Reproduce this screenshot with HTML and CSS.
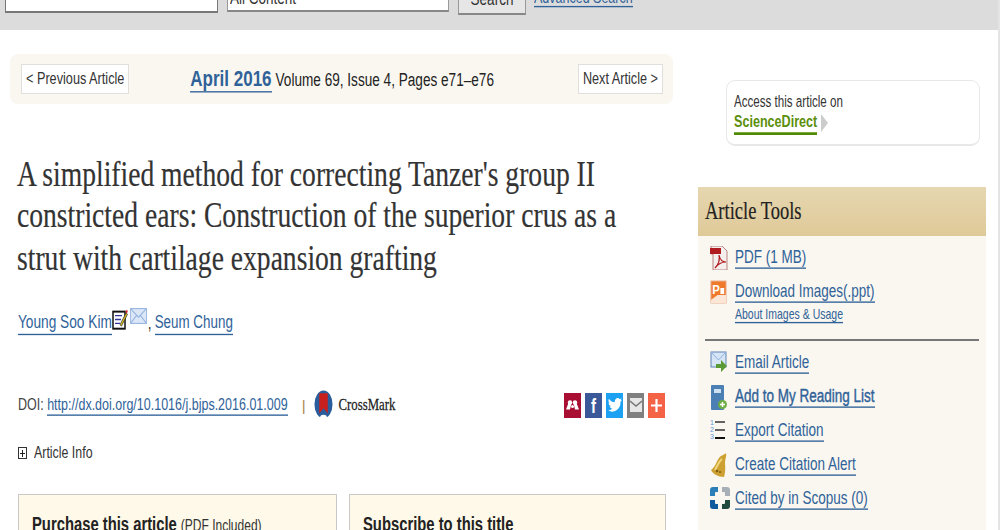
FILE: index.html
```html
<!DOCTYPE html>
<html lang="en">
<head>
<meta charset="utf-8">
<title>A simplified method for correcting Tanzer's group II constricted ears</title>
<link rel="stylesheet" href="styles.css">
</head>
<body>
<div class="page">
  <header class="search-bar">
    <div class="field field-text"></div>
    <div class="field field-select"><span class="tx">All Content</span><svg class="caret" width="7" height="4" viewBox="0 0 7 4"><path d="M0 0h7L3.500 4z" fill="#444"/></svg></div>
    <div class="search-btn"><span class="tx">Search</span></div>
    <a class="adv tx" href="#">Advanced Search</a>
  </header>
  <div class="main">
    <main class="article">
      <nav class="issue-nav">
        <a class="nav-btn" href="#"><span class="tx">&lt; Previous Article</span></a>
        <div class="issue"><a class="issue-date tx" href="#">April 2016</a><span class="issue-info tx">Volume 69, Issue 4, Pages e71–e76</span></div>
        <a class="nav-btn" href="#"><span class="tx">Next Article &gt;</span></a>
      </nav>
      <h1 class="title">A simplified method for correcting Tanzer's group II constricted ears: Construction of the superior crus as a strut with cartilage expansion grafting</h1>
      <div class="authors">
        <a class="tx" href="#">Young Soo Kim</a><svg class="ic-note" width="16" height="21" viewBox="0 0 16 16" preserveAspectRatio="none"><rect x="1" y="2" width="12" height="13" fill="#fff" stroke="#111" stroke-width="1.500"/><path d="M3 5h7M3 8h6M3 11h5" stroke="#33379a"/><path d="M8 12l6-9 1.500 1-6 9z" fill="#e2c522" stroke="#222" stroke-width=".6"/><path d="M13.500 2.500l1-2 1.300 1-.8 2z" fill="#d9232a"/></svg><svg class="ic-mail" width="17" height="16" viewBox="0 0 18 14" preserveAspectRatio="none"><rect x=".5" y=".5" width="17" height="13" fill="#dbe7f7" stroke="#9db8e0"/><path d="M1 1l8 7 8-7M1 13l6-6.500M17 13l-6-6.500" fill="none" stroke="#8fb0df"/></svg><span class="tx comma">,</span><a class="tx seum" href="#">Seum Chung</a>
      </div>
      <div class="doi-row">
        <div class="doi tx">DOI: <a href="#">http://dx.doi.org/10.1016/j.bjps.2016.01.009</a></div>
        <span class="sep">|</span>
        <svg class="cm-logo" width="19" height="30" viewBox="0 0 20 28" preserveAspectRatio="none"><ellipse cx="10" cy="13.500" rx="9.500" ry="13" fill="#2a5d9c"/><path d="M5.500 3h9v19l-4.500-5-4.500 5z" fill="#c8201f"/><path d="M6 27a4 4 0 0 1 8 0z" fill="#fff"/></svg>
        <span class="cm-text tx">CrossMark</span>
        <div class="share">
          <span class="sh sh-m"><svg width="13" height="10" viewBox="0 0 13 10"><circle cx="4" cy="2.500" r="2.200" fill="#fff"/><circle cx="9" cy="2.500" r="2.200" fill="#fff"/><circle cx="6.500" cy="6.500" r="1.500" fill="#fff"/><path d="M2.500 3h3L4 9.500H0zM7.500 3h3L13 9.500H9z" fill="#fff"/></svg></span>
          <span class="sh sh-f"><span class="tx">f</span></span>
          <span class="sh sh-t"><svg width="14" height="14" viewBox="0 0 24 20" preserveAspectRatio="none"><path d="M24 2.400a10 10 0 0 1-2.800.8A5 5 0 0 0 23.300.500a10 10 0 0 1-3.100 1.200 4.900 4.900 0 0 0-8.400 4.500A14 14 0 0 1 1.700.900a4.900 4.900 0 0 0 1.500 6.600 5 5 0 0 1-2.200-.6 4.900 4.900 0 0 0 3.900 4.900 5 5 0 0 1-2.200.1 4.900 4.900 0 0 0 4.600 3.400A9.900 9.900 0 0 1 0 17.300 14 14 0 0 0 21.500 4.900 10 10 0 0 0 24 2.400z" fill="#fff"/></svg></span>
          <span class="sh sh-e"><svg width="12" height="14" viewBox="0 0 12 14"><path d="M0 0h12v14H0z" fill="#e6e6e6"/><path d="M0 3l6 5 6-5" fill="none" stroke="#777" stroke-width="1.500"/></svg></span>
          <span class="sh sh-p"><svg width="11" height="13" viewBox="0 0 11 13"><path d="M0 6.500h11M5.500 0v13" stroke="#fff" stroke-width="2.200"/></svg></span>
        </div>
      </div>
      <div class="info-toggle"><span class="plus"></span><span class="tx">Article Info</span></div>
      <div class="offers">
        <section class="offer"><h2 class="tx">Purchase this article <small>(PDF Included)</small></h2></section>
        <section class="offer"><h2 class="tx">Subscribe to this title</h2></section>
      </div>
    </main>
    <aside class="side">
      <div class="access">
        <div class="tx">Access this article on</div>
        <div class="sd-row"><a class="tx" href="#">ScienceDirect</a><svg width="7" height="18" viewBox="0 0 7 16" preserveAspectRatio="none"><path d="M0 0l7 8-7 8z" fill="#ccc"/></svg></div>
      </div>
      <section class="tools">
        <h2><span class="tx">Article Tools</span></h2>
        <div class="tools-body">
          <ul class="tool-list first">
            <li><svg width="18" height="24" viewBox="0 0 18 24"><path d="M1 0h11l5 5v19H3V8H1z" fill="#f4efec" stroke="#a66" stroke-width=".8"/><rect y="2" width="11" height="6" fill="#b01c20"/><path d="M5 22c3-3 5-8 4-13 1 5 3 7 7 7-4 0-8 2-11 6z" fill="none" stroke="#b01c20" stroke-width="1.200"/></svg><a class="tx" href="#">PDF (1 MB)</a></li>
            <li class="tall"><svg width="17" height="24" viewBox="0 0 18 24" preserveAspectRatio="none"><rect x="1" y="1" width="16" height="22" fill="#f07a2c" stroke="#e9b090"/><path d="M8 15h9v8H1v-3z" fill="#fbe6d8"/><text x="2.500" y="14" class="p-glyph">P</text><rect x="11" y="8" width="4" height="6" fill="#fff"/></svg><div class="stack"><a class="tx" href="#">Download Images(.ppt)</a><a class="about tx" href="#">About Images &amp; Usage</a></div></li>
          </ul>
          <ul class="tool-list">
            <li><svg width="18" height="24" viewBox="0 0 18 24"><rect x="1" y="1" width="15" height="15" fill="#d6e5f6" stroke="#5c83b5"/><path d="M1 1l7.500 8L16 1" fill="none" stroke="#8fb0df"/><path d="M6 13h5v-4l6 6-6 6v-4H6z" fill="#5a9a35"/></svg><a class="tx" href="#">Email Article</a></li>
            <li><svg width="18" height="25" viewBox="0 0 18 25"><rect x="1" y="0" width="13" height="25" rx="1" fill="#4c7fb3"/><rect x="4" y="4" width="7" height="4" fill="#cfe0f0"/><circle cx="12.500" cy="19.500" r="4.500" fill="#6fae45"/><path d="M10 19.500h5M12.500 17v5" stroke="#fff" stroke-width="1.500"/></svg><a class="strong tx" href="#">Add to My Reading List</a></li>
            <li><svg width="18" height="22" viewBox="0 0 18 22"><text x="0" y="6" class="num">1</text><text x="0" y="13" class="num">2</text><text x="0" y="20" class="num">3</text><path d="M5 3h10M5 11h10" stroke="#333" stroke-width="1.500"/><path d="M5 19h10" stroke="#111" stroke-width="2"/></svg><a class="tx" href="#">Export Citation</a></li>
            <li><svg width="18" height="24" viewBox="0 0 18 24"><path d="M16 0c-2 2-5 2-7 5-3 4-3 8-8 12 2 4 7 7 13 7 2-7 1-12 1-15 0-3 2-6 1-9z" fill="#cda032"/><path d="M5 17c2-3 3-8 7-11" stroke="#f0d77e" stroke-width="2" fill="none"/><circle cx="7" cy="18" r="1.300" fill="#7d5c12"/><circle cx="10" cy="19" r="1" fill="#7d5c12"/></svg><a class="tx" href="#">Create Citation Alert</a></li>
            <li><svg width="20" height="22" viewBox="0 0 20 22"><path d="M8 0H3a3 3 0 0 0-3 3v6h5V6a1 1 0 0 1 1-1h2z" fill="#2a7fb8"/><path d="M12 0h5a3 3 0 0 1 3 3v6h-5V6a1 1 0 0 0-1-1h-2z" fill="#a6b0b6"/><path d="M0 13v6a3 3 0 0 0 3 3h5v-5H6a1 1 0 0 1-1-1v-3z" fill="#0e5a9c"/><path d="M20 13v6a3 3 0 0 1-3 3h-5v-5h2a1 1 0 0 0 1-1v-3z" fill="#1f4a3c"/></svg><a class="tx" href="#">Cited by in Scopus (0)</a></li>
          </ul>
          <div class="tools-rule"></div>
        </div>
      </section>
    </aside>
  </div>
</div>
</body>
</html>
```
FILE: styles.css
```css
* { box-sizing: border-box; }
html, body { margin: 0; padding: 0; background: #fff; }
body { font-family: "Liberation Sans", Arial, sans-serif; color: #333; overflow: hidden; }
a { color: #2f6299; text-decoration: none; border-bottom: 1px solid #2f6299; }
ul { list-style: none; margin: 0; padding: 0; }

/* The whole reference is stretched vertically: text keeps its width, gains height. */
.tx { display: inline-block; transform: scaleY(1.35); white-space: nowrap; }

.page { width: 1000px; height: 530px; overflow: hidden; border-right: 2px solid #e4e4e4; }

.search-bar { height: 30px; background: #dcdcdc; display: flex; align-items: flex-end; padding: 0 0 16px 5px; overflow: hidden; font-size: 13.500px; }
.field { height: 22px; flex: none; background: #fff; border: 1px solid #999; border-bottom: 2px solid #888; }
.field-text { width: 213px; margin-bottom: 1px; border-color: #777; }
.field-select { width: 222px; margin-left: 9px; margin-bottom: 2px; padding: 0 3px 7px 2px; color: #333; display: flex; justify-content: space-between; align-items: center; }
.search-btn { width: 68px; height: 30px; margin-left: 9px; margin-bottom: -1px; background: #e6e6e6; border: 1px solid #999; border-bottom: 2px solid #888; text-align: center; line-height: 25px; color: #333; flex: none; }
.adv { margin-left: 8px; font-size: 12.500px; line-height: 12px; margin-bottom: 9px; }

.main { display: flex; align-items: flex-start; }
.article { width: 698px; flex: none; padding: 24px 0 0 10px; }

.issue-nav { width: 663px; height: 50px; background: #faf7f0; border-radius: 8px; display: flex; align-items: center; justify-content: space-between; padding: 0 10px 0 11px; }
.nav-btn { height: 30px; padding: 0 4px; background: #fff; border: 1px solid #e0dfdc; color: #333; font-size: 12.700px; line-height: 28px; }
.issue { display: flex; align-items: baseline; gap: 4px; margin-right: 23px; }
.issue-date { font-size: 17px; font-weight: bold; line-height: 19px; }
.issue-info { font-size: 13.600px; color: #222; }

.title { margin: 49px 0 0 7px; width: 650px; height: 97px; font-family: "Liberation Serif", Georgia, serif; font-size: 27.600px; font-weight: normal; line-height: 32.300px; color: #333; -webkit-text-stroke: .15px #333; transform: scaleY(1.3); transform-origin: left top; }

.authors { margin: 64px 0 0 8px; display: flex; align-items: baseline; font-size: 13.700px; line-height: 17px; height: 24px; }
.ic-note { align-self: flex-start; margin-top: -5px; flex: none; }
.ic-mail { align-self: flex-start; margin: -6px 0 0 2px; flex: none; }
.comma { margin: 0 3px 0 1px; }
.seum { font-size: 13.400px; }

.doi-row { display: flex; align-items: center; margin: 53px 0 0 8px; width: 647px; height: 28px; }
.doi { font-size: 12.500px; color: #444; }
.sep { margin-left: 14px; color: #a9864d; font-size: 15px; }
.cm-logo { margin-left: 8px; flex: none; }
.cm-text { margin-left: 6px; font-family: "Liberation Serif", serif; font-size: 12.800px; color: #222; -webkit-text-stroke: .2px #222; }
.share { margin-left: auto; display: flex; gap: 4px; }
.sh { width: 17px; height: 25px; display: flex; align-items: center; justify-content: center; color: #fff; font-weight: bold; font-size: 15px; line-height: 1; }
.sh-m { background: #a80f33; }
.sh-f { background: #3b5998; }
.sh-t { background: #1da1f2; }
.sh-e { background: #808080; }
.sh-p { background: #f56347; }

.info-toggle { display: flex; align-items: center; margin: 24px 0 0 8px; font-size: 12.400px; color: #333; height: 20px; }
.plus { width: 9px; height: 12px; margin-right: 7px; flex: none; border: 1px solid #333; background: linear-gradient(#222, #222) center / 5px 1px no-repeat, linear-gradient(#222, #222) center / 1px 7px no-repeat, #fff; }

.offers { display: flex; gap: 12px; margin: 31px 0 0 8px; }
.offer { width: 319px; flex: none; height: 60px; background: #fef9e8; border: 1px solid #c8c8c8; padding: 20px 13px; }
.offer:last-child { width: 317px; }
.offer h2 { margin: 0; font-size: 14.800px; line-height: 18px; font-weight: bold; color: #222; transform-origin: left center; }
.offer small { font-size: 12px; font-weight: normal; color: #333; }

.side { width: 288px; flex: none; padding-top: 50px; }
.access { width: 254px; height: 66px; margin-left: 28px; background: #fff; border: 1px solid #e8e8e8; border-bottom-width: 2px; border-radius: 9px; padding: 12px 7px; font-size: 11.600px; line-height: 18px; color: #333; }
.sd-row { display: flex; align-items: center; gap: 4px; margin-top: 3px; }
.sd-row a { color: #5c8f0c; border-bottom: 2px solid #4d8a00; font-size: 12.600px; font-weight: bold; line-height: 15px; }

.tools { margin-top: 41px; }
.tools h2 { height: 49px; margin: 0; padding-left: 7px; background: linear-gradient(#e6d7b0, #dfc998); font-family: "Liberation Serif", serif; font-size: 18.500px; font-weight: normal; line-height: 49px; color: #222; -webkit-text-stroke: .15px #222; }
.tools-body { background: #faf7f0; padding: 10px 7px 0 7px; height: 320px; }
.tool-list li { display: grid; grid-template-columns: 25px 1fr; justify-items: start; align-items: start; height: 34px; padding-left: 5px; }
.tool-list li svg { margin-top: 0; }
.tool-list a { font-size: 13.500px; line-height: 15px; margin-top: 4px; }
.tool-list a.strong { -webkit-text-stroke: .3px #2f6299; }
.tool-list .tall { height: 45px; }
.first { border-bottom: 2px solid #777; height: 95px; margin-bottom: 10px; }
.stack { display: flex; flex-direction: column; align-items: flex-start; }
.stack .about { font-size: 10.500px; line-height: 12px; margin-top: 8px; }
.p-glyph { font-family: "Liberation Sans", sans-serif; font-weight: bold; font-size: 12px; fill: #fff; }
.num { font-family: "Liberation Sans", sans-serif; font-size: 7px; fill: #5e95dc; }
.tools-rule { height: 2px; background: #777; margin-top: 14px; }
```
